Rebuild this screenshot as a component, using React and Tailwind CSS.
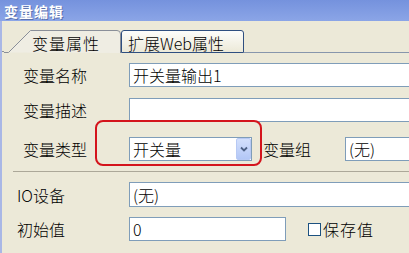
import React from 'react';

const Field = ({ className = '', children }) => (
  <div className={`shrink-0 h-[24px] bg-white border border-[#7f9db9] flex items-center pl-[3px] text-[16px] leading-none whitespace-nowrap ${className}`}>
    {children}
  </div>
);

const Label = ({ className = '', children }) => (
  <div className={`text-[16px] leading-none whitespace-nowrap shrink-0 ${className}`}>{children}</div>
);

export default function App() {
  return (
    <div className="relative w-[409px] h-[253px] overflow-hidden bg-[#ece9d8] text-black font-light font-['Noto_Sans_CJK_SC','DejaVu_Sans',sans-serif]">
      {/* 标题栏 */}
      <div className="h-[21px] flex items-center pl-[4px] bg-gradient-to-b from-[#7592dd] to-[#8ba5e7]">
        <span className="text-[14px] font-bold leading-none text-white tracking-[1px] [text-shadow:1px_1px_0_#5b71ad]">变量编辑</span>
      </div>

      <div className="h-[232px] border-l-2 border-[#a9b7e6]">
        {/* 选项卡 */}
        <div className="h-[32px] flex items-end">
          <div className="shrink-0 w-[2px] h-[1px] mb-[1px] bg-[#8a8f99]" />
          <div className="shrink-0 relative w-[117px] h-[23px] flex items-center pl-[28px] pt-[3px]">
            <svg className="absolute inset-0" width="117" height="23" viewBox="0 0 117 23">
              <path d="M0 22.5 H4.5 L26.5 0.5 H113 Q116.5 0.5 116.5 4 V23" fill="#efede3" stroke="#8a8f99" strokeWidth="1" />
            </svg>
            <span className="relative text-[16px] leading-none tracking-[1px]">变量属性</span>
          </div>
          <div className="shrink-0 w-[123px] h-[23px] flex items-center pl-[6px] pt-[3px] border border-[#2f4f80] rounded-t-[3px] bg-gradient-to-b from-[#fdfdfb] to-[#ece9d8]">
            <span className="text-[16px] leading-none">扩展Web属性</span>
          </div>
          <div className="flex-1 h-[1px] bg-[#8796ac]" />
        </div>

        {/* 变量名称 */}
        <div className="mt-[10px] flex items-center">
          <Label className="ml-[21px] w-[106px]">变量名称</Label>
          <Field className="w-[300px]">开关量输出1</Field>
        </div>

        {/* 变量描述 */}
        <div className="mt-[11px] flex items-center">
          <Label className="ml-[21px] w-[106px]">变量描述</Label>
          <Field className="w-[300px]" />
        </div>

        {/* 变量类型 / 变量组 */}
        <div className="mt-[15px] flex items-center">
          <Label className="ml-[21px] w-[106px]">变量类型</Label>
          <div className="shrink-0 w-[123px] h-[24px] bg-white border border-[#7f9db9] flex items-center">
            <span className="flex-1 pl-[3px] text-[16px] leading-none">开关量</span>
            <div className="w-[15px] h-[22px] flex items-center justify-center rounded-[2px] border border-[#b7c9f4] bg-gradient-to-b from-[#d3e0fc] to-[#b3c7f6]">
              <svg width="8" height="6" viewBox="0 0 8 6">
                <path d="M1 1.5 L4 4.5 L7 1.5" fill="none" stroke="#4d6185" strokeWidth="1.8" />
              </svg>
            </div>
          </div>
          <Label className="ml-[11px] w-[82px]">变量组</Label>
          <Field className="w-[100px]">(无)</Field>
        </div>

        {/* 分隔线 */}
        <div className="mt-[10px] ml-[11px] border-t border-[#aca899] h-[1px] bg-white" />

        {/* IO设备 */}
        <div className="mt-[10px] flex items-center">
          <Label className="ml-[15px] w-[112px]">IO设备</Label>
          <Field className="w-[300px] h-[25px]">(无)</Field>
        </div>

        {/* 初始值 */}
        <div className="mt-[10px] flex items-center">
          <Label className="ml-[15px] w-[112px]">初始值</Label>
          <Field className="w-[157px]">0</Field>
          <div className="shrink-0 ml-[22px] w-[13px] h-[13px] bg-white border border-[#1c5180]" />
          <Label className="ml-[2px] tracking-[1px]">保存值</Label>
        </div>
      </div>

      {/* 红色标注框 */}
      <div className="absolute left-[95px] top-[120px] w-[167px] h-[46px] border-2 border-[#d4141c] rounded-[8px]" />
    </div>
  );
}
